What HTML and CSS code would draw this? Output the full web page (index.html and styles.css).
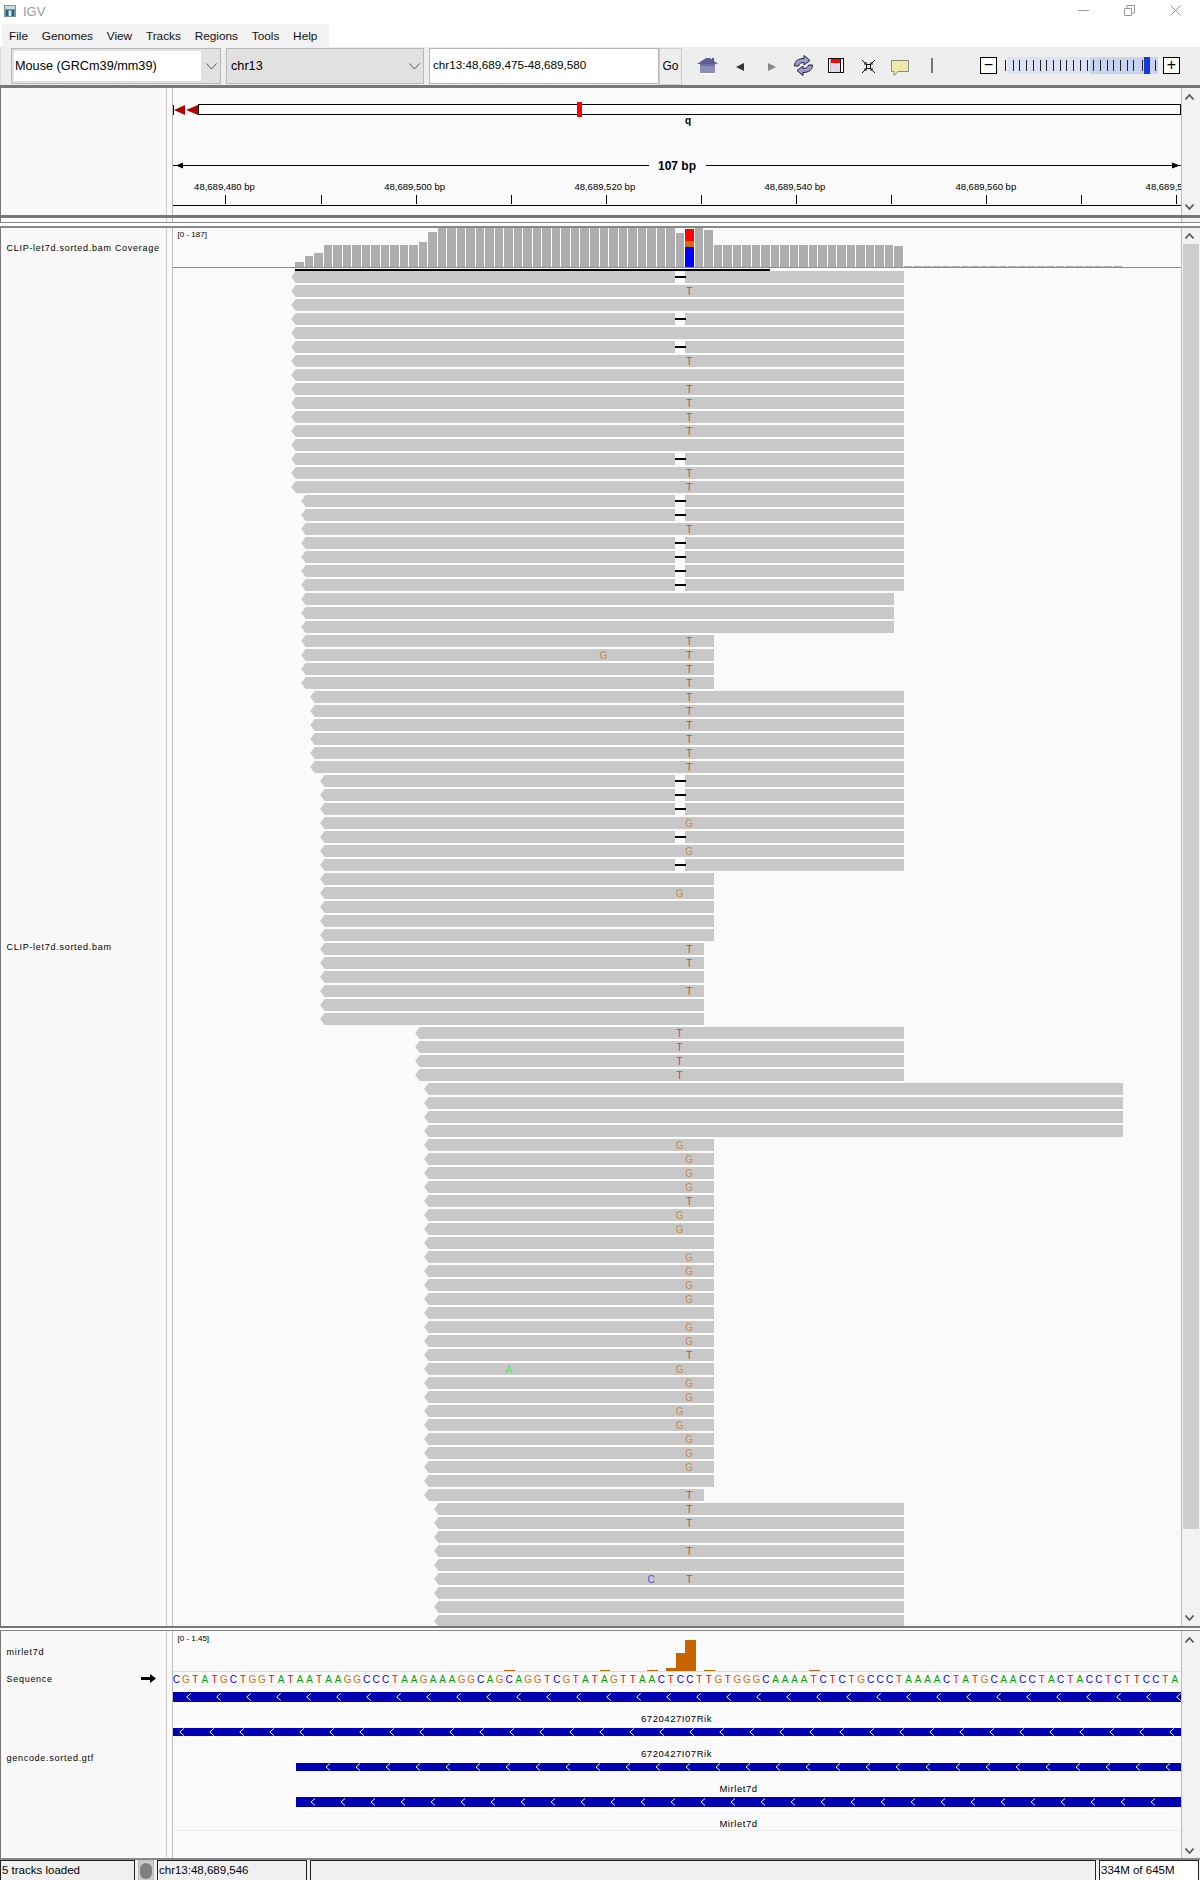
FILE: index.html
```html
<!DOCTYPE html>
<html lang="en">
<head>
<meta charset="utf-8">
<title>IGV</title>
<link rel="stylesheet" href="styles.css">
</head>
<body>
<div class="app">
  <header class="titlebar">
    <svg class="app-icon" width="12" height="12" viewBox="0 0 12 12"><rect width="12" height="12" fill="#6f97a8"/><rect x="1" y="1" width="10" height="3" fill="#c9d9e0"/><rect x="2" y="5" width="2" height="6" fill="#2c5f78"/><rect x="5" y="6" width="2" height="5" fill="#e6eef2"/><rect x="8" y="5" width="2" height="6" fill="#2c5f78"/></svg>
    <span class="app-name">IGV</span>
    <div class="winctl">
      <svg width="11" height="11" viewBox="0 0 11 11"><path d="M0 5.5H11" class="win-stroke"/></svg>
      <svg width="11" height="11" viewBox="0 0 11 11"><path d="M.5 3.5H7.5V10.5H.5ZM3 3V.5H10.5V8H8" class="win-stroke"/></svg>
      <svg width="11" height="11" viewBox="0 0 11 11"><path d="M.5.5L10.5 10.5M10.5.5L.5 10.5" class="win-stroke"/></svg>
    </div>
  </header>
  <nav class="menubar"><span>File</span><span>Genomes</span><span>View</span><span>Tracks</span><span>Regions</span><span>Tools</span><span>Help</span></nav>
  <div class="toolbar">
    <div class="combo combo-genome"><span class="combo-value">Mouse (GRCm39/mm39)</span><svg class="chev" width="11" height="7" viewBox="0 0 11 7"><path d="M.5 .5L5.5 6L10.5 .5"/></svg></div>
    <div class="combo combo-chr"><span class="combo-plain">chr13</span><svg class="chev" width="11" height="7" viewBox="0 0 11 7"><path d="M.5 .5L5.5 6L10.5 .5"/></svg></div>
    <div class="locus">chr13:48,689,475-48,689,580</div>
    <div class="go">Go</div>
    <svg class="tool tool-home" width="21" height="18" viewBox="0 0 21 18"><path d="M15 1h2v4h-2z" fill="#55558a"/><path d="M0 7L9 1H13L21 7Z" fill="#5f5f96"/><path d="M3 7H18V16H3Z" fill="#8b8bb8"/><path d="M3 16H18V17.500H3Z" fill="#fff"/><path d="M3 7H18V9H3Z" fill="#6e6ea3"/></svg>
    <svg class="tool tool-back" width="8" height="8" viewBox="0 0 8 8"><path d="M8 0V8L0 4Z" fill="#333"/></svg>
    <svg class="tool tool-fwd" width="8" height="8" viewBox="0 0 8 8"><path d="M0 0V8L8 4Z" fill="#888"/></svg>
    <svg class="tool tool-refresh" width="21" height="21" viewBox="0 0 21 21"><path d="M1.500 11C1.500 6 5.500 3.500 11 3.500V.5L17 5.500L11 10V7.500C8 7.500 6 8.500 5.500 11Z" fill="#9a9ad6" stroke="#222"/><path d="M19.500 10C19.500 15 15.500 17.500 10 17.500V20.500L4 15.500L10 11V13.500C13 13.500 15 12.500 15.500 10Z" fill="#9a9ad6" stroke="#222"/></svg>
    <svg class="tool tool-region" width="16" height="15" viewBox="0 0 16 15"><rect x=".5" y=".5" width="15" height="14" fill="#fff" stroke="#111"/><rect x="3" y="1" width="9" height="4" fill="#f00"/><rect x="3" y="5" width="9" height="9" fill="#dcdcf4"/><path d="M5 7h3v2h-3zM8 10h3v2h-3z" fill="#f0c8d8"/><rect x="12" y="1" width="1" height="13" fill="#111"/><rect x="2" y="1" width="1" height="13" fill="#bbb"/></svg>
    <svg class="tool tool-fit" width="13" height="13" viewBox="0 0 13 13"><rect x="4.500" y="4.500" width="4" height="4" fill="none" stroke="#111"/><path d="M0 0L4 4M13 0L9 4M0 13L4 9M13 13L9 9" stroke="#111"/><path d="M2 4H4V2M11 4H9V2M2 9H4V11M11 9H9V11" fill="none" stroke="#111"/></svg>
    <svg class="tool tool-note" width="18" height="16" viewBox="0 0 18 16"><path d="M.5 .5H17.500V11.500H7L3 15.500V11.500H.5Z" fill="#eee8aa" stroke="#8a8a80"/></svg>
    <div class="tool-sep"></div>
    <div class="zoom-btn">−</div>
    <div class="zoom-slider"><div class="slider-track" id="slider"></div></div>
    <div class="zoom-btn">+</div>
  </div>

  <section class="panel panel-header">
    <div class="names"></div>
    <div class="attr"></div>
    <svg class="canvas canvas-header" id="header" width="1008" height="127" viewBox="173 88 1008 127"></svg>
    <div class="scroll"><svg class="arrow" width="9" height="6" viewBox="0 0 9 6"><path d="M.5 5.500L4.500 1L8.500 5.500"/></svg><svg class="arrow" width="9" height="6" viewBox="0 0 9 6"><path d="M.5 .5L4.500 5L8.500 .5"/></svg></div>
  </section>
  <div class="strip"><div class="strip-name"></div><div class="attr"></div><div class="strip-data"></div><div class="scroll"></div></div>

  <section class="panel panel-reads">
    <div class="names">
      <div class="track-name track-coverage">CLIP-let7d.sorted.bam Coverage</div>
      <div class="track-name track-align">CLIP-let7d.sorted.bam</div>
    </div>
    <div class="attr"></div>
    <svg class="canvas" id="reads" width="1008" height="1398" viewBox="173 228 1008 1398"></svg>
    <div class="scroll scroll-reads"><svg class="arrow" width="9" height="6" viewBox="0 0 9 6"><path d="M.5 5.500L4.500 1L8.500 5.500"/></svg><div class="thumb"></div><svg class="arrow" width="9" height="6" viewBox="0 0 9 6"><path d="M.5 .5L4.500 5L8.500 .5"/></svg></div>
  </section>

  <section class="panel panel-features">
    <div class="names">
      <div class="track-name track-mir">mirlet7d</div>
      <div class="track-name track-seq">Sequence<svg class="seq-arrow" width="15" height="9" viewBox="0 0 15 9"><path d="M0 3H9V0L15 4.500L9 9V6H0Z" fill="#000"/></svg></div>
      <div class="track-name track-gtf">gencode.sorted.gtf</div>
    </div>
    <div class="attr"></div>
    <svg class="canvas" id="features" width="1008" height="227" viewBox="173 1631 1008 227"></svg>
    <div class="scroll scroll-features"><svg class="arrow" width="9" height="6" viewBox="0 0 9 6"><path d="M.5 5.500L4.500 1L8.500 5.500"/></svg><svg class="arrow" width="9" height="6" viewBox="0 0 9 6"><path d="M.5 .5L4.500 5L8.500 .5"/></svg></div>
  </section>

  <footer class="statusbar">
    <div class="stat stat-tracks">5 tracks loaded</div>
    <div class="stat stat-light"><span class="lamp"></span></div>
    <div class="stat stat-pos">chr13:48,689,546</div>
    <div class="stat stat-blank"></div>
    <div class="stat stat-mem">334M of 645M</div>
  </footer>
</div>
<script src="app.js"></script>
</body>
</html>
```
FILE: styles.css
```css
* { box-sizing: border-box; }
html, body { margin: 0; padding: 0; background: #fff; }
body { font-family: "Liberation Sans", Arial, sans-serif; color: #000; }
.app { width: 1200px; height: 1880px; display: flex; flex-direction: column; overflow: hidden; }

.titlebar { height: 24px; flex: none; display: flex; align-items: center; background: #fff; padding-left: 4px; }
.app-icon { margin-top: -2px; }
.app-name { margin-left: 7px; font-size: 13px; color: #9a9a9a; margin-top: -2px; }
.winctl { margin-left: auto; display: flex; gap: 35px; padding-right: 19px; margin-top: -3px; }
.win-stroke { fill: none; stroke: #999; stroke-width: 1; }

.menubar { width: 327px; height: 23px; flex: none; margin-left: 2px; display: flex; align-items: center; gap: 13.800px; padding-left: 7px; background: #f2f2f2; font-size: 11.800px; color: #111; }

.toolbar { height: 38px; flex: none; display: flex; align-items: flex-start; background: #eeeeee; padding-top: 1px; padding-left: 11px; border-left: 1px solid #ddd; }
.combo { height: 36px; display: flex; align-items: center; background: #e1e1e1; border: 1px solid #b8b8b8; }
.combo-genome { width: 210px; padding: 2px 3px 2px 2px; margin-left: -1px; }
.combo-value { flex: 0 0 187px; height: 100%; background: #fff; display: flex; align-items: center; padding-left: 1px; font-size: 12.700px; }
.combo-plain { flex: 1; padding-left: 4px; font-size: 12.700px; }
.combo-chr { width: 198px; margin-left: 5px; padding-right: 3px; }
.chev { margin-left: 5px; fill: none; stroke: #555; stroke-width: 1; }
.locus { width: 230px; height: 36px; margin-left: 5px; background: #fff; border: 1px solid #b8b8b8; padding-left: 3px; line-height: 31px; font-size: 11.700px; }
.go { width: 23px; height: 37px; background: #eee; border: 1px solid #ccc; text-align: center; line-height: 34px; font-size: 12px; }

.tool { flex: none; }
.tool-home { margin: 9px 0 0 15px; }
.tool-back { margin: 15px 0 0 18px; }
.tool-fwd { margin: 15px 0 0 24px; }
.tool-refresh { margin: 7px 0 0 17px; }
.tool-region { margin: 10px 0 0 14px; }
.tool-fit { margin: 12px 0 0 18px; }
.tool-note { margin: 12px 0 0 16px; }
.tool-sep { width: 2px; height: 15px; margin: 10px 0 0 22px; background: #777; }
.zoom-btn { width: 17px; height: 17px; margin-top: 9px; border: 1px solid #000; background: #fff; text-align: center; line-height: 13px; font-size: 16px; }
.tool-sep + .zoom-btn { margin-left: 47px; }
.zoom-slider { width: 166px; height: 17px; margin-top: 9px; padding-left: 11px; }
.slider-track { position: relative; width: 150px; height: 17px; background: linear-gradient(to right, #dce2f3 0 82px, #c8d3ee 82px 150px); }
.slider-tick { position: absolute; top: 3px; width: 1px; height: 11px; background: #222; }
.slider-thumb { position: absolute; left: 136px; top: 0; width: 6px; height: 17px; background: #1a3ad6; }

.panel { display: flex; flex: none; background: #fafafa; }
.panel-header { height: 133px; border-top: 3px solid #777; border-bottom: 3px solid #777; }
.strip { display: flex; flex: none; height: 5px; background: #fafafa; border-bottom: 1px solid #888; margin-bottom: 3px; }
.strip-name { width: 166px; border-left: 1px solid #777; }
.strip-data { width: 1008px; }
.panel-reads { height: 1402px; border-top: 2px solid #888; border-bottom: 2px solid #777; }
.panel-features { height: 230px; margin-top: 2px; border-top: 1px solid #888; border-bottom: 2px solid #888; }

.names { width: 166px; flex: none; display: flex; flex-direction: column; border-left: 1px solid #777; background: #f9f9f9; }
.attr { width: 7px; background: #fafafa; border-left: 1px solid #ccc; border-right: 1px solid #bbb; flex: none; }
.canvas { display: block; flex: none; background: #fafafa; }
.scroll { width: 19px; flex: none; display: flex; flex-direction: column; align-items: center; justify-content: space-between; padding: 6px 3px 5px 0; background: #f2f2f2; border-left: 1px solid #bbb; }
.strip .scroll { padding: 0; }
.scroll-reads { padding: 5px 3px 5px 0; }
.scroll-features { padding: 6px 3px 4px 0; }
.arrow { fill: none; stroke: #555; stroke-width: 1.600; flex: none; }
.thumb { width: 16px; height: 1285px; margin-top: 5px; margin-bottom: auto; margin-left: 3px; background: #cdcdcd; }

.track-name { padding-left: 5.500px; display: flex; align-items: center; font-size: 9px; letter-spacing: 0.720px; color: #000; }
.track-coverage { height: 40px; }
.track-align { height: 1358px; }
.track-mir { height: 41px; }
.track-seq { height: 14px; }
.track-gtf { height: 144px; }
.seq-arrow { margin-left: auto; margin-right: 10px; margin-top: -1px; }

.statusbar { height: 20px; flex: none; display: flex; background: #f0f0f0; }
.stat { height: 20px; background: #f0f0f0; border: 1px solid #222; border-bottom-width: 0; font-size: 11.500px; line-height: 19px; white-space: nowrap; overflow: hidden; }
.stat-tracks { width: 135px; padding-left: 1px; }
.stat-light { width: 16px; margin-left: 3px; display: flex; align-items: center; justify-content: center; border-color: #bbb; background: #ccc; }
.lamp { width: 12px; height: 16px; border-radius: 6px; background: #808080; }
.stat-pos { width: 150px; margin-left: 3px; padding-left: 1px; }
.stat-blank { width: 786px; margin-left: 3px; }
.stat-mem { width: 100px; margin-left: 3px; padding-left: 1px; background: #fff; }

/* track canvas */
.line { stroke: #000; stroke-width: 1; shape-rendering: crispEdges; }
.tick { stroke: #000; stroke-width: 1; shape-rendering: crispEdges; }
.cyto { fill: #fff; stroke: #000; stroke-width: 1; shape-rendering: crispEdges; }
.cen { fill: #b00000; }
.cen-a { fill: #000; }
.mark { fill: #f00; }
.arm { font-size: 10px; font-weight: 700; text-anchor: middle; }
.span { font-size: 12px; font-weight: 700; text-anchor: middle; }
.pos { font-size: 9.500px; text-anchor: middle; }
.range { font-size: 8px; }
.cov { fill: #aeaeae; shape-rendering: crispEdges; }
.axis { stroke: #8c8c8c; stroke-width: 1; shape-rendering: crispEdges; }
.sum { fill: #000; shape-rendering: crispEdges; }
.sum-shade { fill: #888; shape-rendering: crispEdges; }
.read { fill: #c8c8c8; }
.del-bg { fill: #fafafa; shape-rendering: crispEdges; }
.del { fill: #000; shape-rendering: crispEdges; }
.mm { font-size: 10px; text-anchor: middle; }
.mm-T { fill: #e43a3a; }
.mm-G { fill: #c98a45; }
.mm-A { fill: #55e055; }
.mm-C { fill: #5050dd; }
.fill-r { fill: #f00; shape-rendering: crispEdges; }
.fill-o { fill: #d17105; shape-rendering: crispEdges; }
.fill-b { fill: #00f; shape-rendering: crispEdges; }
.hist { fill: #c86400; shape-rendering: crispEdges; }
.base { font-size: 10px; text-anchor: middle; }
.base-A { fill: #00a000; }
.base-C { fill: #0000ff; }
.base-G { fill: #d17105; }
.base-T { fill: #f00; }
.rule { stroke: #ddd; stroke-width: 1; shape-rendering: crispEdges; }
.rule-soft { stroke: #eee; stroke-width: 1; shape-rendering: crispEdges; }
.gene { fill: #0000b2; shape-rendering: crispEdges; }
.chevron { fill: none; stroke: #fff; stroke-width: 1; }
.gene-label { font-size: 9.500px; letter-spacing: .55px; text-anchor: middle; fill: #000; }
```
FILE: app.js
```js
var BP = 9.509, ORIGIN = 171.6;
function X(k) { return Math.round(ORIGIN + BP * k); }
function C(k) { return 175.7 + BP * k; }
function rect(cls, x, y, w, h) { return '<rect class="' + cls + '" x="' + x + '" y="' + y + '" width="' + w + '" height="' + h + '"/>'; }
function line(cls, x1, y1, x2, y2) { return '<line class="' + cls + '" x1="' + x1 + '" y1="' + y1 + '" x2="' + x2 + '" y2="' + y2 + '"/>'; }
function text(cls, x, y, s) { return '<text class="' + cls + '" x="' + x + '" y="' + y + '">' + s + '</text>'; }
function poly(cls, pts) { return '<polygon class="' + cls + '" points="' + pts + '"/>'; }

/* zoom slider */
(function () {
  var ticks = [-3, 5, 11, 18, 25, 32, 38, 45, 52, 58, 65, 72, 79, 85, 92, 99, 105, 112, 119, 125, 134, 147], h = '';
  ticks.forEach(function (t) { h += '<div class="slider-tick" style="left:' + t + 'px"></div>'; });
  h += '<div class="slider-thumb"></div>';
  document.getElementById('slider').innerHTML = h;
})();

/* header: cytoband + ruler */
(function () {
  var h = '';
  h += line('tick', 173.5, 105, 173.5, 115);
  h += poly('cen', '174,110 185,105 185,115') + poly('cen', '186,110 198,105 198,115');
  h += rect('cyto', 198.5, 104.5, 982, 10);
  h += rect('mark', 577, 102, 5, 15);
  h += text('arm', 688, 124, 'q');
  h += line('line', 173, 165.5, 649, 165.5) + line('line', 706, 165.5, 1181, 165.5);
  h += poly('cen-a', '176,165.5 183,162.5 183,168.5') + poly('cen-a', '1180,165.5 1172,162.5 1172,168.5');
  h += text('span', 677, 170, '107 bp');
  var labels = [['48,689,480 bp', 224.5], ['48,689,500 bp', 414.6], ['48,689,520 bp', 604.8], ['48,689,540 bp', 794.9], ['48,689,560 bp', 985.8], ['48,689,580 bp', 1176]];
  labels.forEach(function (l) { h += text('pos', l[1], 190, l[0]); });
  for (var i = 0; i < 11; i++) {
    var t = Math.round(225.4 + i * 95.1) + 0.5;
    h += line('tick', t, 195, t, 204);
  }
  h += line('line', 173, 205.5, 1181, 205.5);
  document.getElementById('header').innerHTML = h;
})();

/* coverage + alignments */
(function () {
  var h = '';
  var tops = {};
  tops[13] = 262; tops[14] = 256; tops[15] = 253;
  var k;
  for (k = 16; k <= 25; k++) tops[k] = 245;
  tops[26] = 242; tops[27] = 232;
  for (k = 28; k <= 52; k++) tops[k] = 228;
  tops[53] = 233; tops[55] = 228; tops[56] = 230;
  for (k = 57; k <= 75; k++) tops[k] = 245;
  tops[76] = 246;
  for (k = 77; k <= 99; k++) tops[k] = 266;
  for (k in tops) {
    var x = X(+k), w = X(+k + 1) - x - 1;
    h += rect('cov', x, tops[k], w, 267 - tops[k]);
  }
  var xm = X(54), wm = X(55) - xm - 1;
  h += rect('fill-r', xm, 229, wm, 12) + rect('fill-o', xm, 241, wm, 6) + rect('fill-b', xm, 247, wm, 20);
  h += line('axis', 173, 267.5, 1181, 267.5);
  h += rect('sum-shade', 295, 271, 475, 1) + rect('sum', 295, 269, 475, 2);

  var groups = [
    [13, 77, '-T.-.-T.TTTT.-TT'],
    [14, 77, '--T----'], [14, 76, '...'], [14, 57, 'TTTT'],
    [15, 77, 'TTTTTT'],
    [16, 77, '---G-G-'], [16, 57, '.g...'], [16, 56, 'TT.T..'],
    [26, 77, 'tttt'],
    [27, 100, '....'], [27, 57, 'gGGGTgg.GGGG.GGTgGGggGGG.'], [27, 56, 'T'],
    [28, 77, 'TT.T.T...']
  ];
  var extra = { 27: [['G', 45]], 78: [['A', 35]], 93: [['C', 50]] };
  var row = 0;
  groups.forEach(function (g) {
    for (var j = 0; j < g[2].length; j++, row++) {
      var top = 271 + 14 * row, b = X(g[0]) + 0.7, e = X(g[1]), mid = top + 6, c = g[2].charAt(j);
      h += poly('read', (b - 4.5) + ',' + mid + ' ' + b + ',' + top + ' ' + e + ',' + top + ' ' + e + ',' + (top + 12) + ' ' + b + ',' + (top + 12));
      if (c === '-') {
        h += rect('del-bg', X(53) - 1, top, 10, 12) + rect('del', X(53) - 1, mid - 1, 11, 2);
      } else if (c !== '.') {
        var base = c.toUpperCase(), col = (c === 'g' || c === 't') ? 53 : 54;
        h += text('mm mm-' + base, C(col), mid + 3.5, base);
      }
      (extra[row] || []).forEach(function (m) { h += text('mm mm-' + m[0], C(m[1]), mid + 3.5, m[0]); });
    }
  });
  h += text('range', 177.5, 237, '[0 - 187]');
  document.getElementById('reads').innerHTML = h;
})();

/* mirlet7d histogram, sequence, genes */
(function () {
  var h = '';
  h += text('range', 177.5, 1641, '[0 - 1.45]');
  var bars = [[504, 11, 1], [600, 10, 1], [647, 11, 1], [666, 10, 3], [676, 9, 18], [685, 11, 31], [704, 11, 1], [809, 11, 1]];
  bars.forEach(function (b) { h += rect('hist', b[0], 1671 - b[2], b[1], b[2]); });
  h += line('rule', 173, 1671.5, 1181, 1671.5);
  var seq = 'CGTATGCTGGTATAATAAGGCCCTAAGAAAGGCAGCAGGTCGTATAGTTAACTCCTTGTGGGCAAAATCTCTGCCCTAAAACTATGCAACCTACTACCTCTTCCTA';
  for (var i = 0; i < seq.length; i++) {
    h += text('base base-' + seq[i], 176.4 + BP * i, 1682.5, seq[i]);
  }
  h += line('rule-soft', 173, 1685.5, 1181, 1685.5);
  var genes = [
    [173, 1692, 10, 188.7, 1179],
    [173, 1728, 8, 181.8, 1173],
    [296, 1763, 8, 328, 1169],
    [296, 1797, 10, 313, 1154]
  ];
  genes.forEach(function (g) {
    h += rect('gene', g[0], g[1], 1181 - g[0], g[2]);
    var cy = g[1] + g[2] / 2;
    for (var x = g[3]; x <= g[4]; x += 30) {
      h += '<path class="chevron" d="M' + (x + 2) + ' ' + (cy - 3.5) + 'L' + (x - 2) + ' ' + cy + 'L' + (x + 2) + ' ' + (cy + 3.5) + '"/>';
    }
  });
  h += text('gene-label', 676.5, 1722, '6720427I07Rik');
  h += text('gene-label', 676.5, 1757, '6720427I07Rik');
  h += text('gene-label', 738.5, 1792, 'Mirlet7d');
  h += text('gene-label', 738.5, 1827, 'Mirlet7d');
  h += line('rule-soft', 173, 1830.5, 1181, 1830.5);
  document.getElementById('features').innerHTML = h;
})();
```
